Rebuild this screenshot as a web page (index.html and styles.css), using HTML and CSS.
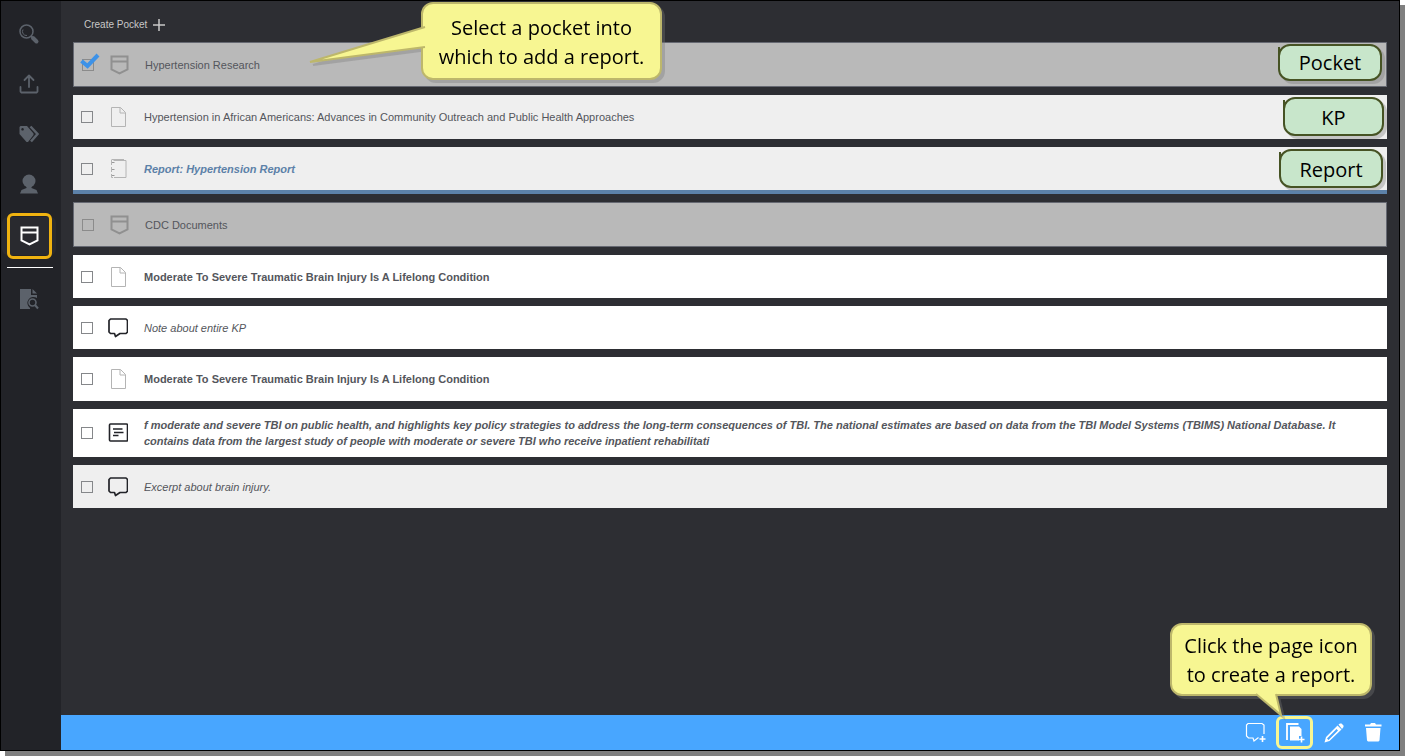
FILE: index.html
```html
<!DOCTYPE html>
<html lang="en">
<head>
<meta charset="utf-8">
<title>Pockets</title>
<link rel="stylesheet" href="styles.css">
</head>
<body>
<svg class="defs" aria-hidden="true">
  <symbol id="pocket" viewBox="0 0 20 20"><path d="M2.500 1.500h16v13l-8 4-8-4z M2.500 6.500h16" fill="none" stroke="currentColor" stroke-width="2"/></symbol>
  <symbol id="page" viewBox="0 0 20 20"><path d="M3.500.5h9l5 5v14h-14v-19zM12 .5v5.500h5.500" fill="none" stroke="currentColor"/></symbol>
  <symbol id="report" viewBox="0 0 20 20"><path d="M3.500.500h12.500M5.500 1.500h12.500v17h-12" fill="none" stroke="currentColor"/><path d="M3.500 1v17.500h3" fill="none" stroke="currentColor" stroke-dasharray="5 2"/><path d="M4 3.500h2.500M4 10.500h2.500M4 16.500h2.500" fill="none" stroke="#999"/></symbol>
  <symbol id="note" viewBox="0 0 20 20"><path d="M2.500 1h15.500l1.500 1.500v11.500l-1.500 1.500h-6L7.500 18.500l-1-3h-4L1 14V2.500z" fill="none" stroke="currentColor" stroke-width="1.700" stroke-linejoin="round"/></symbol>
  <symbol id="excerpt" viewBox="0 0 20 20"><rect x="1.500" y="1" width="18" height="17" rx="1" fill="none" stroke="currentColor" stroke-width="1.600"/><path d="M5 6h9.500M6 9.500h9.500M5 12.500h5.500" stroke="currentColor" stroke-width="1.400"/></symbol>
</svg>
<div class="window">
  <nav class="sidebar" aria-label="Sections">
    <button class="nav" aria-label="Search"><svg viewBox="0 0 20 20"><circle cx="7.500" cy="7.500" r="6.500" fill="none" stroke="currentColor" stroke-width="1.500"/><path d="M4 5.500a4 4 0 0 0 4 6" fill="none" stroke="currentColor"/><path d="M12 12l2 2" stroke="currentColor" stroke-width="1.500"/><path d="M14 14l3.500 3.500" stroke="currentColor" stroke-width="4" stroke-linecap="round"/></svg></button>
    <button class="nav" aria-label="Upload"><svg viewBox="0 0 20 20" fill="none" stroke="currentColor" stroke-width="1.800" stroke-linecap="round" stroke-linejoin="round"><path d="M10 13V1.500M5.500 6 10 1.500 14.500 6M1.500 13v4.500l1 1h15l1-1V13"/></svg></button>
    <button class="nav" aria-label="Tags"><svg viewBox="0 0 20 20"><path fill-rule="evenodd" fill="currentColor" d="M.5 3 1.500 2H8l6.500 7.500v1.500L9 18H7.500L.5 10zM3.500 4a1.300 1.300 0 1 0 .1 0z"/><path d="M11.500 2.500 18.500 10l-6.500 7.500" fill="none" stroke="currentColor" stroke-width="2.500"/></svg></button>
    <button class="nav" aria-label="Profile"><svg viewBox="0 0 20 20" fill="currentColor"><circle cx="10" cy="7" r="6.500"/><path d="M7.500 11h5v3l5 2 1.500 3.500H1L2.500 16l5-2z"/></svg></button>
    <button class="nav active" aria-label="Pockets"><svg><use href="#pocket"/></svg></button>
    <hr class="rule">
    <button class="nav" aria-label="Search in document"><svg viewBox="0 0 20 20"><path d="M1 0h11v6h6v3a6 6 0 0 0-7 10v1H1zM13.500 0 18 4.500h-4.500z" fill="currentColor"/><circle cx="13.500" cy="13.500" r="3.500" fill="none" stroke="currentColor" stroke-width="1.600"/><path d="m16 16 3 3.500" stroke="currentColor" stroke-width="2"/></svg></button>
  </nav>
  <div class="content">
    <main class="main">
      <button class="create"><span>Create Pocket</span><svg viewBox="0 0 12 12"><path d="M6 0v12M0 6h12" stroke="currentColor" stroke-width="1.500"/></svg></button>
      <ul class="list">
        <li class="row pocket">
          <input type="checkbox" class="check" id="r1" checked>
          <svg class="tick" viewBox="0 0 20 16"><path d="m1.500 8 6 5L18 2" fill="none" stroke="#3d92e8" stroke-width="4"/></svg>
          <svg class="icon"><use href="#pocket"/></svg>
          <label for="r1">Hypertension Research</label>
          <span class="tag">Pocket</span>
          <div class="callout select">Select a pocket into<br>which to add a report.
            <svg class="tail-left" viewBox="0 0 116 40"><path d="M116 3 1 38 116 23" fill="#f7f692" stroke="#bdb76b" stroke-width="2"/></svg>
          </div>
        </li>
        <li class="row shaded plain">
          <input type="checkbox" class="check" id="r2">
          <svg class="icon pale"><use href="#page"/></svg>
          <label for="r2">Hypertension in African Americans: Advances in Community Outreach and Public Health Approaches</label>
          <span class="tag kp">KP</span>
        </li>
        <li class="row shaded report">
          <input type="checkbox" class="check" id="r3">
          <svg class="icon pale"><use href="#report"/></svg>
          <label for="r3">Report: Hypertension Report</label>
          <span class="tag rep">Report</span>
        </li>
        <li class="row pocket">
          <input type="checkbox" class="check" id="r4">
          <svg class="icon"><use href="#pocket"/></svg>
          <label for="r4">CDC Documents</label>
        </li>
        <li class="row">
          <input type="checkbox" class="check" id="r5">
          <svg class="icon pale"><use href="#page"/></svg>
          <label for="r5">Moderate To Severe Traumatic Brain Injury Is A Lifelong Condition</label>
        </li>
        <li class="row note">
          <input type="checkbox" class="check" id="r6">
          <svg class="icon"><use href="#note"/></svg>
          <label for="r6">Note about entire KP</label>
        </li>
        <li class="row tall">
          <input type="checkbox" class="check" id="r7">
          <svg class="icon pale"><use href="#page"/></svg>
          <label for="r7">Moderate To Severe Traumatic Brain Injury Is A Lifelong Condition</label>
        </li>
        <li class="row excerpt">
          <input type="checkbox" class="check" id="r8">
          <svg class="icon"><use href="#excerpt"/></svg>
          <label for="r8">f moderate and severe TBI on public health, and highlights key policy strategies to address the long-term consequences of TBI. The national estimates are based on data from the TBI Model Systems (TBIMS) National Database. It contains data from the largest study of people with moderate or severe TBI who receive inpatient rehabilitati</label>
        </li>
        <li class="row note shaded">
          <input type="checkbox" class="check" id="r9">
          <svg class="icon"><use href="#note"/></svg>
          <label for="r9">Excerpt about brain injury.</label>
        </li>
      </ul>
    </main>
    <footer class="bar">
      <button class="tool" aria-label="Add note"><svg viewBox="0 0 20 20" fill="none" stroke="currentColor"><path d="M12.500 14.500 8 18l-1-3H2.500l-2-2V2l1.500-1.500h14l2 1.500v9" stroke-width="1.200"/><path d="M16.500 13v6M13.500 16h6" stroke-width="1.600"/></svg></button>
      <button class="tool chosen" aria-label="Create report"><svg viewBox="0 0 20 20"><path d="M2 17V1h11.500" fill="none" stroke="currentColor" stroke-width="1.800"/><path d="M5 3.500h9l2.500 2.500v7h-2.500v4.500H5z" fill="currentColor"/><path d="M16.500 13.500v6M13.500 16.500h6" stroke="currentColor" stroke-width="1.600"/></svg></button>
      <button class="tool" aria-label="Edit"><svg viewBox="0 0 20 20" fill="currentColor"><path d="m14.500 1.500 1.500-1h1.500L19.500 2.500v1.500l-1.500 2zM13.500 2.500l4 4L5.500 18 .5 19.500 2 14zM3 15.500l1.500 1.500 9.500-9.500-1.500-1.500z" fill-rule="evenodd"/></svg></button>
      <button class="tool" aria-label="Delete"><svg viewBox="0 0 20 20" fill="currentColor"><path d="M2 1.500h5l1-1.500h4l1 1.500H18.500v2H2zM3 5h14.500l-1 12.500-1 1H5l-1-1z"/></svg></button>
      <div class="callout create-tip">Click the page icon<br>to create a report.
        <svg class="tail-down" viewBox="0 0 32 26"><path d="M2 1 27 22 22 1" fill="#f7f692" stroke="#bdb76b" stroke-width="2"/></svg>
      </div>
    </footer>
  </div>
</div>
</body>
</html>
```
FILE: styles.css
```css
* { box-sizing: border-box; }
body {
  margin: 0;
  min-height: 100vh;
  padding: 0 5px 5px 0;
  display: flex;
  background: #fff;
  font: 11px/16px "Liberation Sans", Arial, sans-serif;
  color: #54565c;
}
button { border: 0; padding: 0; background: none; color: inherit; font: inherit; cursor: pointer; }
svg { display: block; overflow: visible; }
.defs { position: absolute; width: 0; height: 0; }

.window {
  flex: 1;
  display: flex;
  border: 1px solid #000;
  background: #2d2e33;
  box-shadow: 5px 5px 0 #808080;
}
.sidebar {
  width: 60px;
  padding: 8px 5px 0 1px;
  background: #222328;
  color: #5c626b;
}
.nav {
  width: 54px;
  height: 50px;
  display: flex;
  align-items: center;
  justify-content: center;
}
.nav svg { width: 20px; height: 20px; }
.nav.active {
  position: relative;
  height: 38px;
  margin: 8px 0;
  border-radius: 6px;
  background: #292a2f;
  color: #fff;
}
.nav.active::before {
  content: "";
  position: absolute;
  inset: -4px 4px -4px 5px;
  border: 3px solid #f0b310;
  border-radius: 6px;
}
.rule { margin: 12px 3px 6px 5px; border: 0; border-top: 1px solid #fff; }

.content { flex: 1; min-width: 0; display: flex; flex-direction: column; }
.main { flex: 1; padding: 14px 12px; }
.create {
  display: flex;
  align-items: center;
  gap: 6px;
  padding-left: 11px;
  height: 19px;
  font-size: 10px;
  color: #c8c8c8;
}
.create svg { width: 12px; height: 12px; }
.list {
  list-style: none;
  margin: 8px 0 0;
  padding: 0;
  display: flex;
  flex-direction: column;
  gap: 8px;
}
.row {
  position: relative;
  display: flex;
  align-items: center;
  min-height: 43px;
  padding: 8px 28px 8px 8px;
  background: #fff;
  font-weight: bold;
}
.row.shaded { background: #efefef; }
.row.tall { min-height: 44px; }
.row.plain { min-height: 44px; font-weight: normal; }
.row.pocket { min-height: 45px; background: #b9b9b9; border: 1px solid #666972; color: #54565c; font-weight: normal; }
.row.report { min-height: 47px; border-bottom: 4px solid #5c81a8; color: #5c81a8; font-style: italic; }
.row.note { font-weight: normal; font-style: italic; }
.row.excerpt { min-height: 48px; font-style: italic; }

.check {
  appearance: none;
  flex: none;
  width: 12px;
  height: 12px;
  margin: 0 15px 0 0;
  border: 1px solid #85878a;
}
.pocket .check { border-color: #8b8b8b; }
.tick { position: absolute; left: 6px; top: 10px; width: 20px; height: 16px; }
.icon { flex: none; width: 20px; height: 20px; margin-right: 16px; color: #222328; }
.icon.pale { color: #b4b4b4; }
.pocket .icon { color: #909090; }

.tag {
  position: absolute;
  right: 4px;
  top: 1px;
  width: 104px;
  height: 37px;
  display: grid;
  place-items: center;
  border: 2px solid #465324;
  border-radius: 12px;
  background: #c8e6cb;
  box-shadow: 3px 3px 0 rgba(120, 120, 120, .35);
  color: #000;
  font: 20px/28px "Open Sans", "Noto Sans", sans-serif;
}
.tag::before {
  content: "";
  position: absolute;
  left: -2px;
  top: 1px;
  width: 2px;
  height: 10px;
  background: #465324;
}
.tag.kp { top: 2px; right: 3px; width: 101px; height: 39px; padding-top: 3px; }
.tag.rep { top: 2px; height: 39px; padding-top: 3px; }

.callout {
  position: absolute;
  z-index: 1;
  padding: 9px 0 7px;
  border: 2px solid #bdb76b;
  border-radius: 12px;
  background: #f7f692;
  filter: drop-shadow(3px 3px 0 rgba(120, 120, 120, .35));
  color: #000;
  font: 20px/29px "Open Sans", "Noto Sans", sans-serif;
  text-align: center;
  white-space: nowrap;
}
.callout.select { left: 347px; top: -41px; width: 241px; }
.tail-left { position: absolute; left: -114px; top: 20px; width: 116px; height: 40px; }
.tail-down { position: absolute; left: 82px; top: 68px; width: 32px; height: 26px; }

.bar {
  position: relative;
  display: flex;
  justify-content: flex-end;
  align-items: center;
  height: 35px;
  padding-right: 7px;
  background: #48a6ff;
  color: #fff;
}
.tool { width: 39px; height: 35px; display: grid; place-items: center; }
.tool svg { width: 20px; height: 20px; }
.tool.chosen {
  width: 37px;
  height: 33px;
  margin: 0 1px;
  border: 3px solid #f7f692;
  border-radius: 6px;
}
.callout.create-tip { right: 27px; bottom: 54px; width: 202px; padding: 6px 0 5px; }
```
